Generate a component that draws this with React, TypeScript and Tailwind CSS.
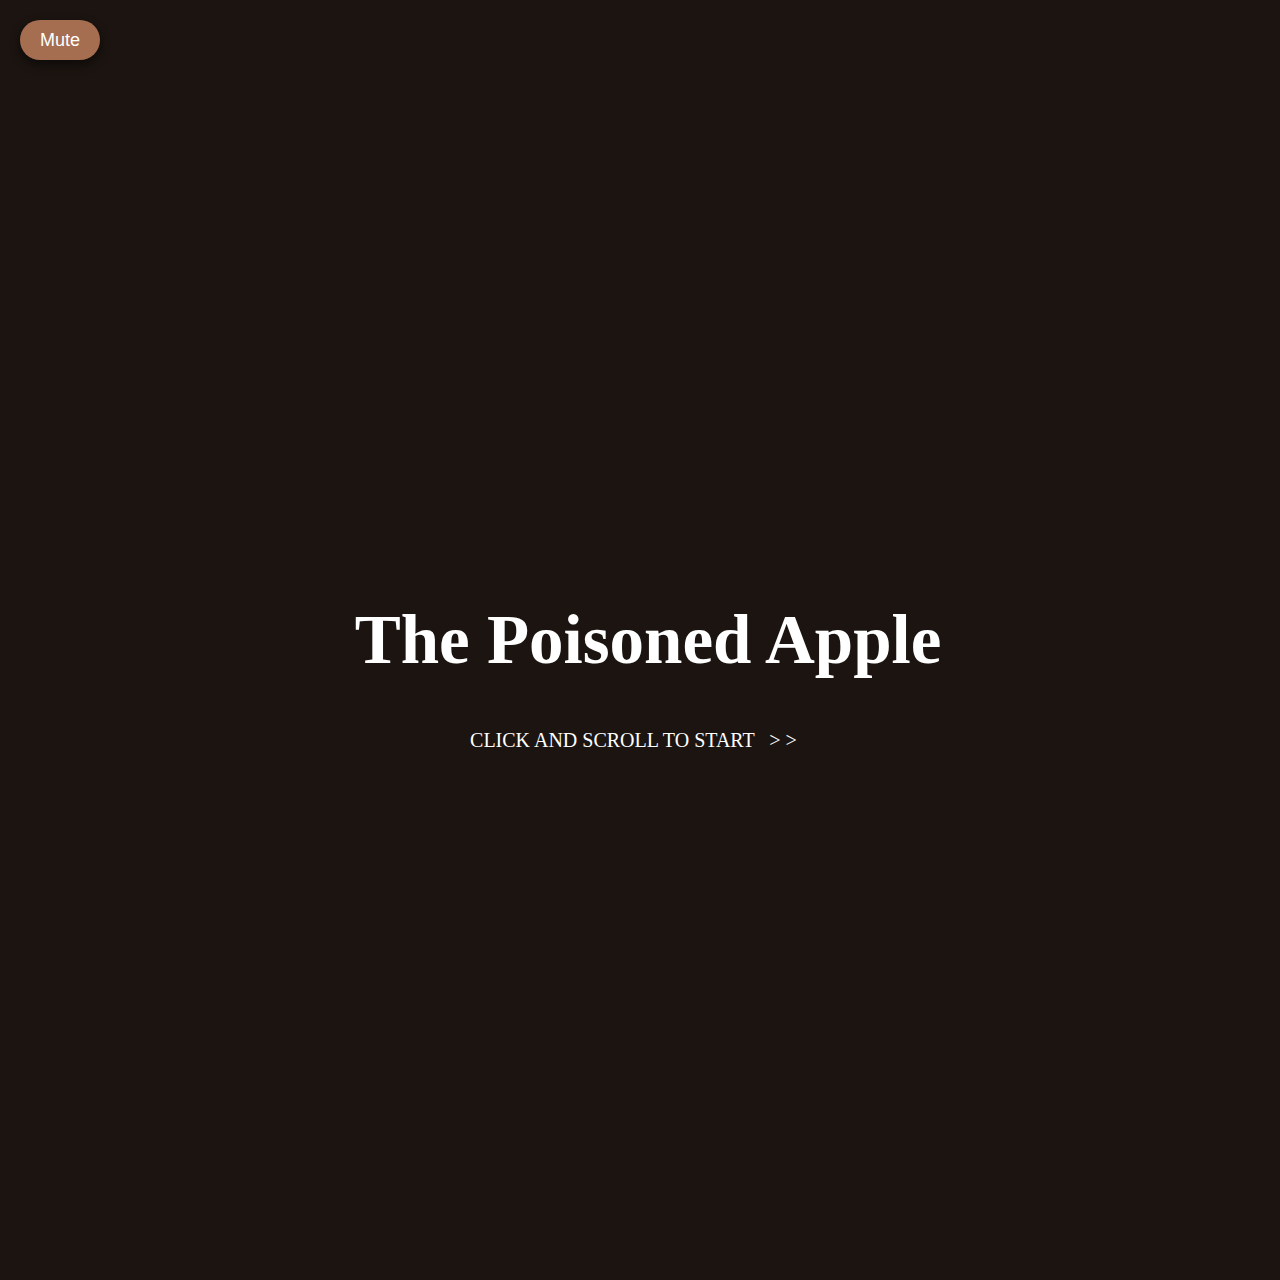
import React from 'react'

const App = () => {
  return (
    <div className="relative min-h-[1280px] w-full bg-[#1b1410] flex flex-col items-center">
      {/* Sound toggle */}
      <button className="absolute top-5 left-5 w-20 h-10 rounded-full bg-[#a56e50] text-white text-[18px] shadow-[0_4px_10px_rgba(0,0,0,0.5)] font-['Liberation_Sans',Arial,sans-serif]">
        Mute
      </button>

      <div className="flex flex-col items-center pt-[600px] font-['Liberation_Serif','Times_New_Roman',serif] text-white">
        <h1 className="text-[69px] leading-[80px] font-bold pl-[16px]">The Poisoned Apple</h1>
        <p className="mt-[46px] text-[20px] leading-[28px] pr-[13px]">
          CLICK AND SCROLL TO START <span className="ml-[10px]">&gt; &gt;</span>
        </p>
      </div>
    </div>
  )
}

export default App
